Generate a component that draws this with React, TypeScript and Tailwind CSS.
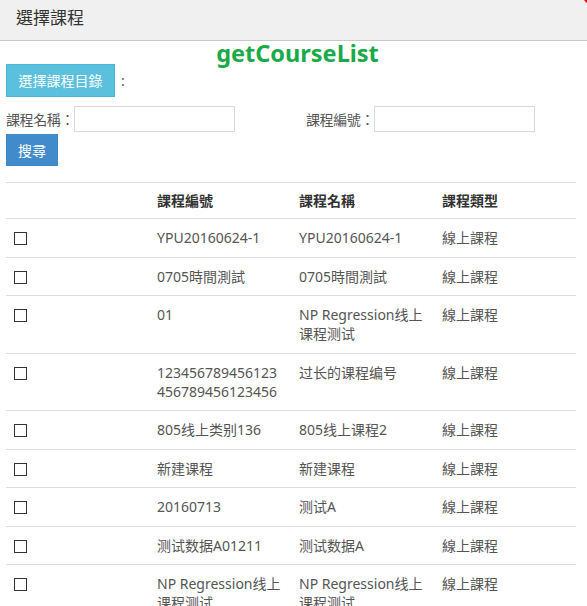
const rows: { id: React.ReactNode; name: string }[] = [
  { id: "YPU20160624-1", name: "YPU20160624-1" },
  { id: "0705時間測試", name: "0705時間測試" },
  { id: "01", name: "NP Regression线上课程测试" },
  {
    id: (
      <>
        123456789456123
        <br />
        456789456123456
      </>
    ),
    name: "过长的课程编号",
  },
  { id: "805线上类别136", name: "805线上课程2" },
  { id: "新建课程", name: "新建课程" },
  { id: "20160713", name: "测试A" },
  { id: "测试数据A01211", name: "测试数据A" },
  { id: "NP Regression线上课程测试", name: "NP Regression线上课程测试" },
];

export default function App() {
  return (
    <div
      className="relative w-[587px] h-[606px] overflow-hidden bg-white text-[14px] text-[#555]"
      style={{ fontFamily: '"Noto Sans", "Noto Sans CJK TC", sans-serif' }}
    >
      {/* close button peeking in from the corner */}
      <div className="absolute right-[-12px] top-[-12px] h-[16px] w-[16px] rounded-full bg-[#e8141b]" />

      <div className="h-[41px] bg-[#f0f0f0] border-b border-[#c8c8c8] pl-[16px] flex items-center">
        <h1 className="text-[17px] text-[#333] leading-none -mt-[6px]">選擇課程</h1>
      </div>

      <div className="px-[6px]">
        <div className="h-[23px] flex justify-center items-end">
          <span className="text-[23.5px] font-bold text-[#1aaa48] leading-none -mr-[8px] mb-[-1px]">getCourseList</span>
        </div>

        <div className="flex items-center gap-[6px]">
          <button className="h-[33px] w-[109px] bg-[#5bc0de] border border-[#46b8da] text-white text-[14px]">
            選擇課程目錄
          </button>
          <span>:</span>
        </div>

        <div className="flex items-center mt-[9px] h-[26px]">
          <span className="w-[68px] shrink-0 whitespace-nowrap tracking-[-0.4px]">課程名稱：</span>
          <input className="h-[26px] w-[161px] shrink-0 border border-[#d9d9d9] outline-none" />
          <span className="ml-[71px] w-[68px] shrink-0 whitespace-nowrap tracking-[-0.4px]">課程編號：</span>
          <input className="h-[26px] w-[161px] shrink-0 border border-[#d9d9d9] outline-none" />
        </div>

        <button className="mt-[2px] h-[32px] w-[52px] bg-[#428bca] text-white text-[14px] block">搜尋</button>

        <table className="mt-[16px] w-[570px] table-fixed border-collapse leading-[19px]">
          <thead>
            <tr className="border-t border-b border-[#ddd]">
              <th className="w-[143px]" />
              <th className="w-[142px] text-left font-bold text-[#333] px-[8px] pt-[8px] pb-[7px] leading-[20px]">課程編號</th>
              <th className="w-[143px] text-left font-bold text-[#333] px-[8px] pt-[8px] pb-[7px] leading-[20px]">課程名稱</th>
              <th className="w-[142px] text-left font-bold text-[#333] px-[8px] pt-[8px] pb-[7px] leading-[20px]">課程類型</th>
            </tr>
          </thead>
          <tbody>
            {rows.map((r, i) => (
              <tr key={i} className="border-b border-[#ddd] align-top">
                <td className="px-[8px] pt-[13px]">
                  <div className="h-[13px] w-[13px] border border-[#333]" />
                </td>
                <td className="px-[8px] pt-[9px] pb-[9.5px]">{r.id}</td>
                <td className="px-[8px] pt-[9px] pb-[9.5px]">{r.name}</td>
                <td className="px-[8px] pt-[9px] pb-[9.5px]">線上課程</td>
              </tr>
            ))}
          </tbody>
        </table>
      </div>
    </div>
  );
}
